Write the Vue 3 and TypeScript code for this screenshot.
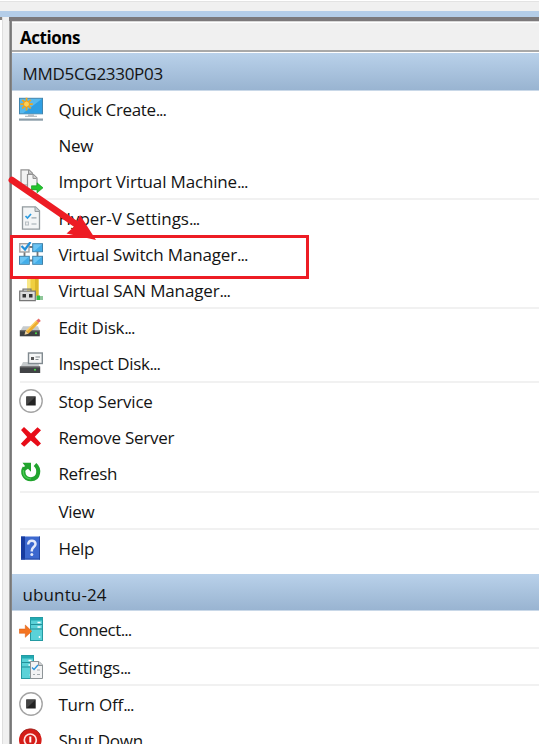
<script setup lang="ts">
interface Action {
  label: string
  icon?: string
  more?: boolean
  tracking: number
}
interface Group {
  actions: Action[]
  gap?: boolean
}
interface Section {
  title: string
  tracking: number
  groups: Group[]
}

const sections: Section[] = [
  {
    title: 'MMD5CG2330P03',
    tracking: -0.3,
    groups: [
      {
        actions: [
          { label: 'Quick Create', more: true, icon: 'create', tracking: -0.37 },
          { label: 'New', tracking: -0.3 },
          { label: 'Import Virtual Machine', more: true, icon: 'import', tracking: -0.16 },
        ],
      },
      {
        actions: [
          { label: 'Hyper-V Settings', more: true, icon: 'prefs', tracking: -0.03 },
          { label: 'Virtual Switch Manager', more: true, icon: 'switch', tracking: -0.16 },
          { label: 'Virtual SAN Manager', more: true, icon: 'san', tracking: -0.13 },
        ],
      },
      {
        gap: true,
        actions: [
          { label: 'Edit Disk', more: true, icon: 'edit', tracking: -0.28 },
          { label: 'Inspect Disk', more: true, icon: 'inspect', tracking: -0.37 },
        ],
      },
      {
        gap: true,
        actions: [
          { label: 'Stop Service', icon: 'stop', tracking: -0.2 },
          { label: 'Remove Server', icon: 'remove', tracking: -0.27 },
          { label: 'Refresh', icon: 'refresh', tracking: -0.28 },
        ],
      },
      { actions: [{ label: 'View', tracking: -0.25 }] },
      { actions: [{ label: 'Help', icon: 'help', tracking: -0.25 }] },
    ],
  },
  {
    title: 'ubuntu-24',
    tracking: 0.12,
    groups: [
      { actions: [{ label: 'Connect', more: true, icon: 'connect', tracking: -0.45 }], gap: true },
      { actions: [{ label: 'Settings', more: true, icon: 'settings', tracking: -0.19 }] },
      {
        actions: [
          { label: 'Turn Off', more: true, icon: 'stop', tracking: -0.19 },
          { label: 'Shut Down', more: true, icon: 'shutdown', tracking: -0.25 },
        ],
      },
    ],
  },
]
</script>

<template>
  <div class="window">
    <div class="toolbar"></div>
    <div class="band"></div>
    <div class="body">
      <div class="neighbour"></div>
      <div class="splitter"></div>
      <aside class="pane">
        <h1 class="pane-title">Actions</h1>
        <section v-for="s in sections" :key="s.title" class="section">
          <h2 class="section-title" :style="{ letterSpacing: s.tracking + 'px' }">{{ s.title }}</h2>
          <ul v-for="(g, i) in s.groups" :key="i" class="group" :class="{ gap: g.gap }">
            <li v-for="a in g.actions" :key="a.label" class="action">
              <svg class="icon" viewBox="0 0 24 24">
                <g v-if="a.icon === 'create'" transform="translate(0 .8)">
                  <rect x=".5" y=".5" width="23" height="15.500" fill="#56b9ee" stroke="#4385ad" />
                  <path d="M23 1v14.500H4z" fill="#2f9fe3" />
                  <path d="M9 16.500h6v1.500h3v1.200H6V18h3z" fill="#b7bfc4" />
                  <rect y="20.700" width="24" height="2.200" fill="#8b9da9" />
                  <path d="M7.500 0v12.600M1.200 6.300h12.600M3.200 2l8.600 8.600M11.800 2l-8.600 8.600" stroke="#f0a51d" stroke-width="1.800" />
                  <circle cx="7.500" cy="6.300" r="3" fill="#ffcf55" stroke="#e99d1c" />
                </g>
                <g v-else-if="a.icon === 'import'">
                  <path d="M2 .8h8l3.500 3.500V16H2z" fill="#f2f2f2" stroke="#929292" stroke-width="1.200" />
                  <path d="M9.500 1v4h4" fill="#ccc" stroke="#929292" />
                  <path d="M8.500 5.500h6l3.500 3.500V20.500H8.500z" fill="#f5f5f5" stroke="#929292" stroke-width="1.200" />
                  <path d="M14 6v3.500h3.500" fill="#ccc" stroke="#929292" />
                  <path d="M12.500 16.800h5.500v-3l6 5-6 5v-3h-5.500z" fill="#23c52d" stroke="#169e22" stroke-width=".7" />
                </g>
                <g v-else-if="a.icon === 'prefs'">
                  <path d="M3.500 .8h13l4 4v18.400h-17z" fill="#f3f5f6" stroke="#929a9e" stroke-width="1.300" />
                  <path d="M16 1v4.500h4.500" fill="#cdd2d5" stroke="#929a9e" />
                  <path d="M6.500 10l2 2L12 8" fill="none" stroke="#2c9be0" stroke-width="1.700" />
                  <path d="M12.500 11.800h5M12.500 18h5" stroke="#9ba7ae" stroke-width="1.200" />
                  <rect x="6.500" y="16" width="3" height="3" fill="#eee" stroke="#b7bfc4" />
                </g>
                <g v-else-if="a.icon === 'switch'">
                  <path d="M5.500 9v5M18.500 9v5M10 5h4M10 18.500h4" stroke="#777" stroke-width="1.800" />
                  <g fill="#6cc5f4" stroke="#4081a8">
                    <rect x="13.700" y="1.700" width="9.800" height="8" />
                    <rect x=".5" y="14.300" width="9.800" height="8" />
                    <rect x="13.700" y="14.300" width="9.800" height="8" />
                  </g>
                  <path d="M23 2.200v7h-8zM9.800 14.800v7h-8zM23 14.800v7h-8z" fill="#43ade8" />
                  <rect x=".8" y="1.700" width="9.200" height="8.300" fill="#f5f5f5" stroke="#a0a0a0" stroke-width="1.400" />
                  <path d="M2.500 4l3.500 3.500L11.500 0" fill="none" stroke="#218fd9" stroke-width="2.200" />
                </g>
                <g v-else-if="a.icon === 'san'" transform="translate(0 1.500)">
                  <path d="M8 -1h11.500v19H8z" fill="#f0cf3f" />
                  <path d="M8 -1h3.500v19H8z" fill="#f9e887" />
                  <path d="M16 -1h3.500v19H16z" fill="#ddb82a" />
                  <path d="M4 12V9.700h8V12" fill="none" stroke="#777" stroke-width="1.200" />
                  <path d="M.7 11.700h15.600v9.500H.7z" fill="#ddd" stroke="#777" stroke-width="1.200" />
                  <path d="M3.500 14.500h3.500v3.500H3.500zM10 14.500h3.500v3.500H10z" fill="#333" />
                  <path d="M17 16.500h7v4h-7z" fill="#8fc79a" />
                  <rect x="18" y="16" width="3" height="4.500" fill="#35be43" />
                </g>
                <g v-else-if="a.icon === 'edit'" transform="translate(0 2.300)">
                  <path d="M4 9h15l2 5H1z" fill="#c6cacc" />
                  <rect x=".8" y="13" width="20" height="6" fill="#3e4042" />
                  <path d="M1 13.500h19.500" stroke="#777" />
                  <circle cx="17" cy="16" r="1" fill="#47e449" />
                  <path d="M8 15L18.500 4.500" stroke="#edae31" stroke-width="3.800" />
                  <path d="M7.500 13.500L17.500 3.500" stroke="#ffd471" stroke-width="1.200" />
                  <path d="M17.300 3.200l2.500-2 2 2.500-2.500 2z" fill="#e66f6a" />
                  <path d="M5.500 17.500l1-4 3 3z" fill="#eed2a0" />
                </g>
                <g v-else-if="a.icon === 'inspect'" transform="translate(0 1)">
                  <path d="M4 10h15l2 6H1z" fill="#c6cacc" />
                  <rect x=".8" y="14.500" width="20.400" height="6.500" fill="#414346" />
                  <path d="M1 15h20" stroke="#777" />
                  <circle cx="16" cy="17.800" r="1" fill="#47e449" />
                  <rect x="9.500" y="1" width="13.800" height="10.500" fill="#f5f6f6" stroke="#818a90" stroke-width="1.400" />
                  <path d="M12 5h3v3h-3z" fill="#555" />
                  <path d="M16.500 5h4.500M16.500 7.500h3" stroke="#82898d" />
                </g>
                <g v-else-if="a.icon === 'stop'">
                  <circle cx="12" cy="12" r="11.200" fill="#fff" stroke="#a4a4a4" stroke-width="1.400" />
                  <rect x="7.300" y="7.500" width="9.400" height="9" fill="#222" />
                  <path d="M7.300 7.500h9.400l-9.400 9z" fill="#444" />
                </g>
                <g v-else-if="a.icon === 'remove'" transform="translate(0 .8)">
                  <path d="M2 4.300L5 1.300l7 6.400 6.500-6.200 3.500 3L15.800 11l6.200 6.800-3.300 3-6.900-6.200-6.600 6.300-3.400-3L8.200 11.200z" fill="#e80c18" />
                </g>
                <g v-else-if="a.icon === 'refresh'">
                  <path d="M5.500 6.500C2.500 11 5 18.200 12 18.200c8.500 0 9-10.500 4-14.700" fill="none" stroke="#21a42e" stroke-width="4" />
                  <path d="M3.500 1.800h8.500v9l-3-3-3 2-2.500-2.300 2.500-2.500z" fill="#21a42e" />
                  <path d="M4.500 9c-1 6 3 9 7.500 9" fill="none" stroke="#4acb54" stroke-width="1.200" />
                </g>
                <g v-else-if="a.icon === 'help'">
                  <rect x="2" y=".5" width="19" height="23" fill="#3c68cf" />
                  <rect x="2" y=".5" width="4" height="23" fill="#173b9f" />
                  <path d="M20.500 .5v23M2 23h19" stroke="#2549a5" />
                  <path d="M9.200 8.600c.1-5.300 7.300-5 7.300-.7 0 3-3.700 3.200-3.700 6.500v1" fill="none" stroke="#e4eafa" stroke-width="2.500" />
                  <circle cx="12.800" cy="18.500" r="1.500" fill="#e4eafa" />
                </g>
                <g v-else-if="a.icon === 'connect' || a.icon === 'settings'">
                  <g :class="a.icon === 'settings' ? 'tower-left' : ''">
                    <rect x="11.500" y=".5" width="12" height="23" fill="#5ad2d8" stroke="#249aa2" />
                    <path d="M11.500 1h12v2.500h-12z" fill="#22aab2" />
                    <path d="M12 7.500h11M12 12h11" stroke="#238f98" />
                    <path d="M18.500 5.500h3M18.500 10h3" stroke="#fff" stroke-width="1.300" />
                    <circle cx="20.500" cy="20" r=".9" fill="#fff" />
                  </g>
                  <path v-if="a.icon === 'connect'" d="M.3 12h6V8l6.500 6.300-6.500 6v-4h-6z" fill="#f47421" stroke="#d95409" stroke-width=".5" />
                  <g v-else>
                    <path d="M11.500 6.500h8.500l3.500 3.500v13.500h-12z" fill="#f2f3f4" stroke="#8e9598" />
                    <path d="M19.500 7v3.500H23" fill="#ccc" stroke="#8e9598" />
                    <path d="M13 12.500l2 2 4-4.500" fill="none" stroke="#2792da" stroke-width="1.300" />
                    <path d="M18 15h3M18 19.500h3M14 19.500h2" stroke="#a2aaae" />
                  </g>
                </g>
                <g v-else-if="a.icon === 'shutdown'">
                  <circle cx="11.300" cy="12" r="11.300" fill="#d51d18" />
                  <path d="M2 7C5-1 18-1 21 7" fill="none" stroke="#9d2722" />
                  <circle cx="11.300" cy="12" r="6" fill="none" stroke="#ffe5e2" stroke-width="1.700" />
                  <path d="M11.300 8.500v6" stroke="#fff" stroke-width="2" />
                </g>
              </svg>
              <span class="label" :style="{ letterSpacing: a.tracking + 'px' }">{{ a.label }}<span v-if="a.more" class="dots">...</span></span>
            </li>
          </ul>
        </section>
      </aside>
    </div>
    <svg class="markup" viewBox="0 0 539 744">
      <path d="M11.800 180L75 223.500" stroke="#ed1c24" stroke-width="6.500" stroke-linecap="round" />
      <path d="M80 215l16 25-29.500-6.500L75 226z" fill="#ed1c24" />
      <rect x="11.500" y="236.500" width="296" height="41" fill="none" stroke="#ed1c24" stroke-width="3" />
    </svg>
  </div>
</template>

<style>
body {
  margin: 0;
  background: #fff;
}
</style>

<style scoped>
.window {
  position: relative;
  display: flex;
  flex-direction: column;
  height: 744px;
  overflow: hidden;
  background: #f0f0f0;
  color: #141414;
  font-family: 'Open Sans', 'Noto Sans', sans-serif;
  font-size: 17px;
}
.toolbar {
  flex: none;
  height: 11px;
  box-sizing: border-box;
  border-top: 1px solid #fff;
  box-shadow: inset 0 1px #e3e3e3;
}
.band {
  flex: none;
  height: 6px;
  background: #b4cde8;
}
.body {
  display: flex;
  flex: 1;
  min-height: 0;
}
.neighbour {
  width: 2px;
  box-sizing: border-box;
  background: #fff;
  border-top: 3px solid #85817f;
}
.splitter {
  width: 7px;
  box-sizing: border-box;
  background: #f0f0f0;
  border-left: 1px solid #dedede;
}
.pane {
  flex: 1;
  box-sizing: border-box;
  border-top: 4px solid #7c797b;
  background: linear-gradient(90deg, #a8a8a8 0 1px, #777 1px 2px, #858585 2px 3px, #fff 3px);
  padding-left: 3px;
}
.pane-title {
  height: 32px;
  box-sizing: border-box;
  margin: 0;
  padding-left: 8px;
  border-top: 1px solid #d8d8d8;
  border-bottom: 1px solid #fff;
  box-shadow: inset 0 1px #fff, inset 0 -2px #a9a9a9;
  background: #f0f0f0;
  color: #000;
  font-size: 17px;
  font-weight: 700;
  letter-spacing: -0.45px;
  line-height: 31px;
}
.section-title {
  height: 38px;
  box-sizing: border-box;
  margin: 0;
  padding-left: 10.5px;
  border-bottom: 1px solid #c9d8e8;
  background: linear-gradient(#b9d1ea, #99b4d1);
  font-size: 17px;
  font-weight: 400;
  line-height: 41px;
}
.section {
  margin-bottom: 8px;
}
.section + .section .section-title {
  height: 37px;
}
.group {
  margin: 0;
  padding: 0;
  list-style: none;
}
.group + .group::before {
  content: '';
  display: block;
  height: 2px;
  margin: -1px 0 0 8px;
  background: #f1f1f1;
}
.gap {
  padding-bottom: 1px;
}
.action {
  display: flex;
  align-items: center;
  height: 36px;
  padding-left: 7.4px;
}
.icon {
  flex: none;
  width: 24px;
  height: 24px;
  margin-right: 15px;
}
.label {
  padding-top: 2px;
  line-height: 36px;
  white-space: nowrap;
}
.dots {
  letter-spacing: -1px;
}
.tower-left {
  transform: translateX(-9px);
}
.markup {
  position: absolute;
  top: 0;
  left: 0;
  width: 539px;
  height: 744px;
}
</style>
